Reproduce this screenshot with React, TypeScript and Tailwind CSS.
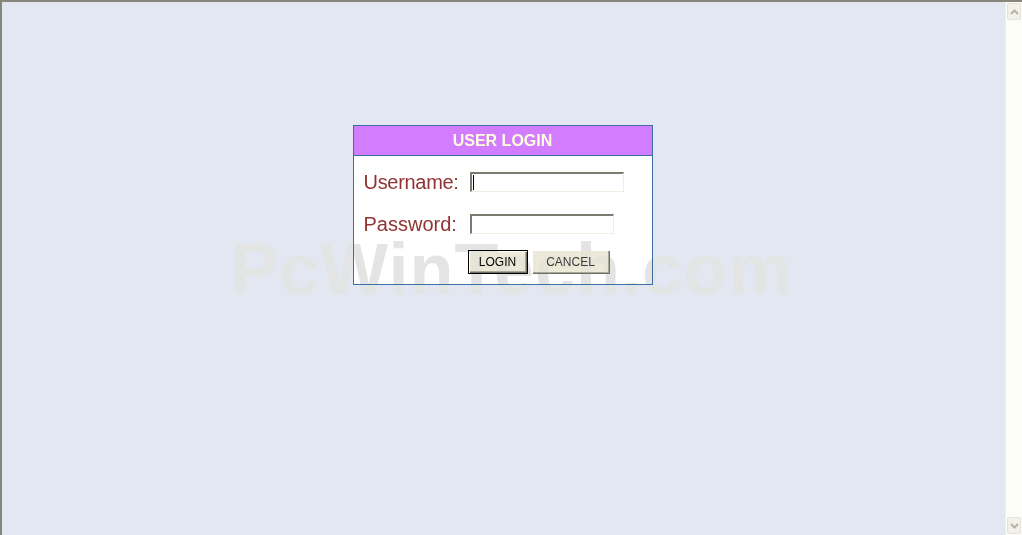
import React from 'react';

const font = "font-['Liberation_Sans',Arial,sans-serif]";

const ScrollButton = ({ dir }: { dir: 'up' | 'down' }) => (
  <div className="mx-[1px] h-[17px] rounded-[2px] border border-[#e6e4d8] bg-[#f3f2ea] flex items-center justify-center">
    <svg width="9" height="6" viewBox="0 0 9 6">
      <path
        d={dir === 'up' ? 'M1 5 L4.5 1.5 L8 5' : 'M1 1 L4.5 4.5 L8 1'}
        stroke="#b4b4aa"
        strokeWidth="2"
        fill="none"
      />
    </svg>
  </div>
);

const App = () => {
  return (
    <div className={`relative isolate w-[1022px] h-[535px] overflow-hidden flex border-t-2 border-l-2 border-[#86867a] bg-[#e3e7f1] ${font}`}>
      <div className="flex-1 flex justify-center pt-[123px] pr-[2px]">
        <div className="w-[300px] h-[160px] border border-[#3d6ea8] bg-white">
          <div className="h-[30px] border-b border-[#3d6ea8] bg-[#d27cff] flex items-center justify-center">
            <span className="text-[16px] font-bold text-[#ffffdd] leading-none">USER LOGIN</span>
          </div>
          <div className="pt-[14px] pl-[10px] flex flex-col">
            <div className="flex items-center h-[24px]">
              <label className="w-[106px] text-[20px] leading-[24px] tracking-[-0.3px] text-[#923333]">Username:</label>
              <div className="relative w-[154px] h-[20px] border-t-2 border-l-2 border-b border-r border-t-[#7c7b6f] border-l-[#7c7b6f] border-b-[#f0eee2] border-r-[#f0eee2] bg-white">
                <span className="absolute left-[1px] top-[1px] w-[1px] h-[15px] bg-black" />
              </div>
            </div>
            <div className="flex items-center h-[24px] mt-[18px]">
              <label className="w-[106px] text-[20px] leading-[24px] text-[#923333]">Password:</label>
              <div className="w-[144px] h-[20px] border-t-2 border-l-2 border-b border-r border-t-[#7c7b6f] border-l-[#7c7b6f] border-b-[#f0eee2] border-r-[#f0eee2] bg-white" />
            </div>
            <div className="flex gap-[4px] mt-[14px] pl-[104px]">
              <button className="w-[60px] h-[24px] border border-black bg-[#ece9d8] text-[12px] text-black shadow-[inset_1px_1px_#ffffff,inset_-1px_-1px_#716f64,inset_-2px_-2px_#aca899]">
                LOGIN
              </button>
              <button className="w-[78px] h-[24px] bg-[#ece9d8] text-[12px] text-[#3a3a3a] shadow-[inset_1px_1px_#ffffff,inset_-1px_-1px_#716f64,inset_-2px_-2px_#aca899]">
                CANCEL
              </button>
            </div>
          </div>
        </div>
      </div>
      <div className="w-[17px] h-full border-l border-[#eeeee8] bg-[#fdfdf7] flex flex-col justify-between py-[1px]">
        <ScrollButton dir="up" />
        <ScrollButton dir="down" />
      </div>
      <div className="pointer-events-none absolute left-[228px] top-[231px] text-[72px] leading-[72px] font-bold text-[#e4e4e4] mix-blend-darken tracking-[1px]">
        PcWinTech.com
      </div>
    </div>
  );
};

export default App;
